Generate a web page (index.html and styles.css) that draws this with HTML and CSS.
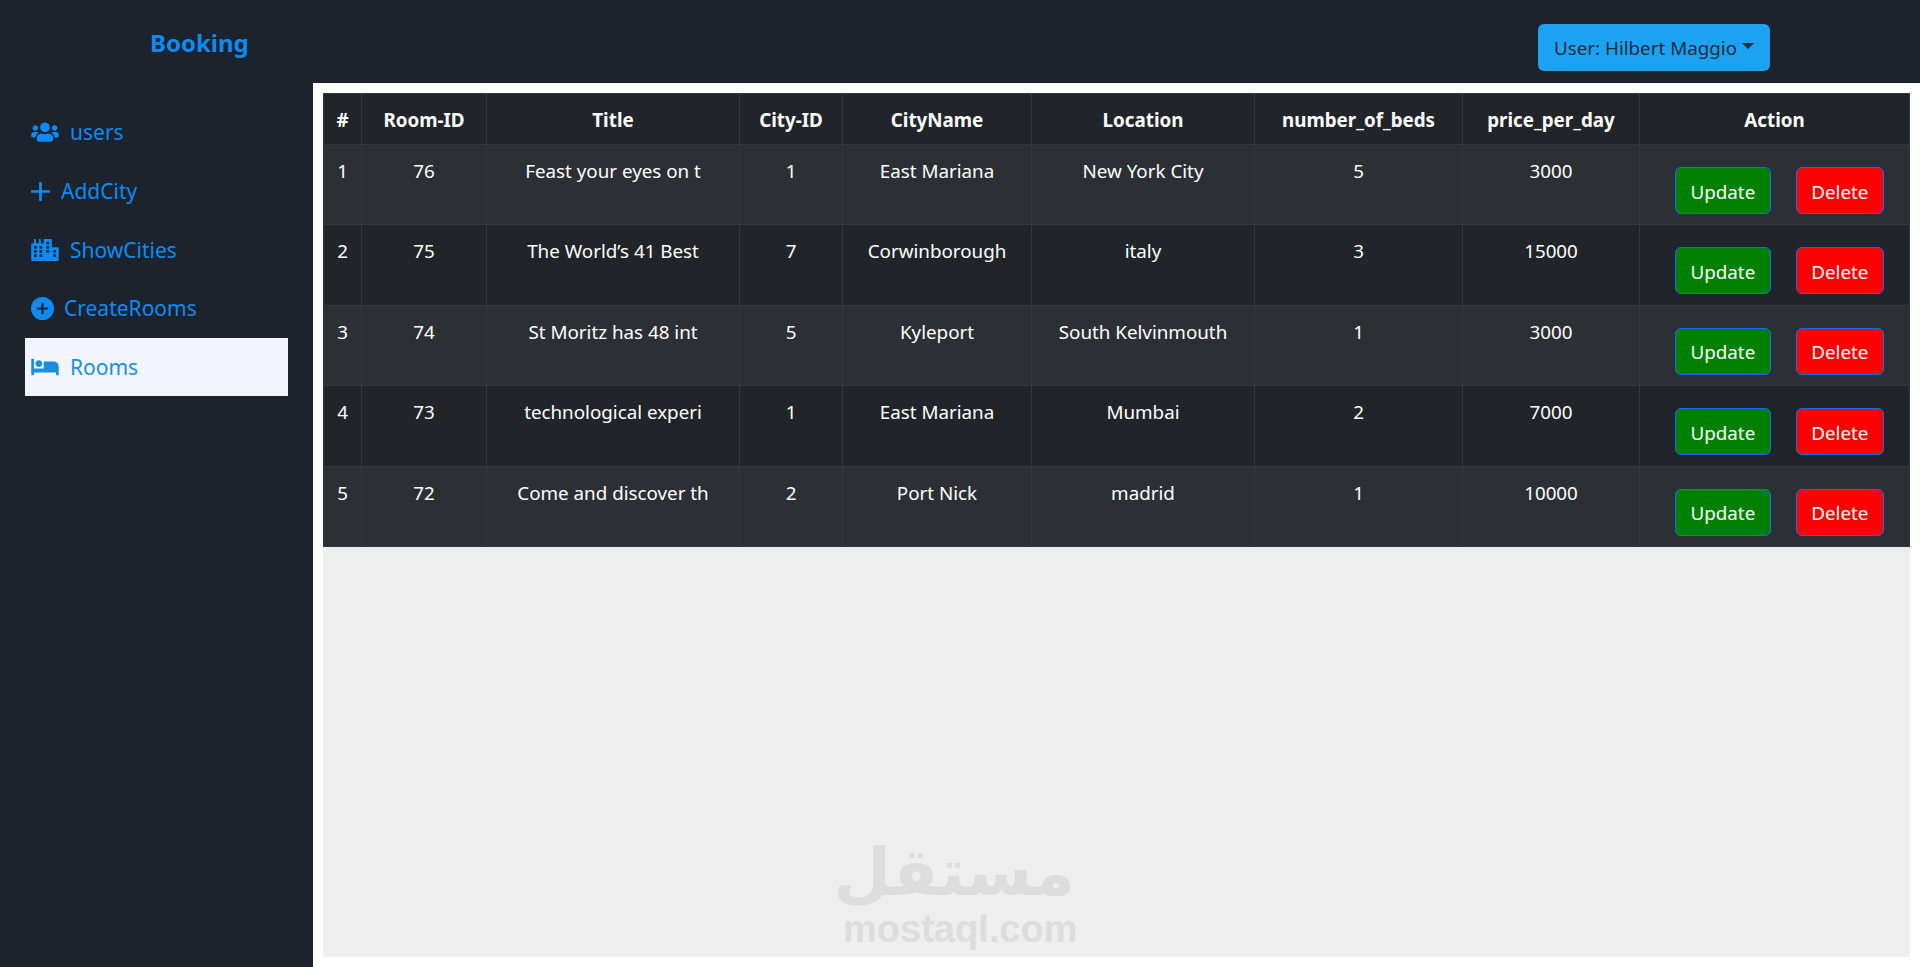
FILE: index.html
```html
<!DOCTYPE html>
<html lang="en">
<head>
    <meta charset="UTF-8">
    <meta name="viewport" content="width=device-width, initial-scale=1.0">
    <title>Booking</title>
    <link rel="stylesheet" href="styles.css">
</head>
<body>
    <header class="topbar">
        <a class="brand" href="#">Booking</a>
        <button class="user-btn">User: Hilbert Maggio<span class="caret"></span></button>
    </header>

    <div class="layout">
        <nav class="sidebar">
            <a class="nav-link" href="#">
                <svg class="icon icon-wide" viewBox="0 0 640 512"><path d="M96 224c35.3 0 64-28.7 64-64s-28.7-64-64-64-64 28.7-64 64 28.7 64 64 64zm448 0c35.3 0 64-28.7 64-64s-28.7-64-64-64-64 28.7-64 64 28.7 64 64 64zm32 32h-64c-17.6 0-33.5 7.1-45.1 18.6 40.3 22.1 68.9 62 75.1 109.4h66c17.7 0 32-14.3 32-32v-32c0-35.3-28.7-64-64-64zm-256 0c61.9 0 112-50.1 112-112S381.9 32 320 32 208 82.1 208 144s50.1 112 112 112zm76.8 32h-8.3c-20.8 10-43.9 16-68.5 16s-47.6-6-68.5-16h-8.3C179.6 288 128 339.6 128 403.2V432c0 26.5 21.5 48 48 48h288c26.5 0 48-21.5 48-48v-28.8c0-63.6-51.6-115.2-115.2-115.2zm-223.7-13.4C161.5 263.1 145.6 256 128 256H64c-35.3 0-64 28.7-64 64v32c0 17.7 14.3 32 32 32h65.9c6.3-47.4 34.9-87.3 75.2-109.4z"/></svg>
                users
            </a>
            <a class="nav-link" href="#">
                <svg class="icon icon-plus" viewBox="0 0 18 18"><path d="M9 1v16M1 9h16" fill="none" stroke="currentColor" stroke-width="2.6" stroke-linecap="round"/></svg>
                AddCity
            </a>
            <a class="nav-link" href="#">
                <svg class="icon icon-wide" viewBox="0 0 640 512"><path d="M616 192H480V24c0-13.26-10.74-24-24-24H312c-13.26 0-24 10.74-24 24v72h-64V16c0-8.84-7.16-16-16-16h-16c-8.84 0-16 7.16-16 16v80h-64V16c0-8.84-7.16-16-16-16H80c-8.84 0-16 7.16-16 16v80H24c-13.26 0-24 10.74-24 24v360c0 17.67 14.33 32 32 32h576c17.67 0 32-14.33 32-32V216c0-13.26-10.75-24-24-24zM128 404c0 6.63-5.37 12-12 12H76c-6.63 0-12-5.37-12-12v-40c0-6.63 5.37-12 12-12h40c6.63 0 12 5.37 12 12v40zm0-96c0 6.63-5.37 12-12 12H76c-6.63 0-12-5.37-12-12v-40c0-6.63 5.37-12 12-12h40c6.63 0 12 5.37 12 12v40zm0-96c0 6.63-5.37 12-12 12H76c-6.63 0-12-5.37-12-12v-40c0-6.63 5.37-12 12-12h40c6.63 0 12 5.37 12 12v40zm128 192c0 6.63-5.37 12-12 12h-40c-6.63 0-12-5.37-12-12v-40c0-6.63 5.37-12 12-12h40c6.63 0 12 5.37 12 12v40zm0-96c0 6.63-5.37 12-12 12h-40c-6.63 0-12-5.37-12-12v-40c0-6.63 5.37-12 12-12h40c6.63 0 12 5.37 12 12v40zm0-96c0 6.63-5.37 12-12 12h-40c-6.63 0-12-5.37-12-12v-40c0-6.63 5.37-12 12-12h40c6.63 0 12 5.37 12 12v40zm160 96c0 6.63-5.37 12-12 12h-40c-6.63 0-12-5.37-12-12v-40c0-6.63 5.37-12 12-12h40c6.63 0 12 5.37 12 12v40zm0-96c0 6.63-5.37 12-12 12h-40c-6.63 0-12-5.37-12-12v-40c0-6.63 5.37-12 12-12h40c6.63 0 12 5.37 12 12v40zm0-96c0 6.63-5.37 12-12 12h-40c-6.63 0-12-5.37-12-12V76c0-6.63 5.37-12 12-12h40c6.63 0 12 5.37 12 12v40zm160 288c0 6.63-5.37 12-12 12h-40c-6.63 0-12-5.37-12-12v-40c0-6.63 5.37-12 12-12h40c6.63 0 12 5.37 12 12v40zm0-96c0 6.63-5.37 12-12 12h-40c-6.63 0-12-5.37-12-12v-40c0-6.63 5.37-12 12-12h40c6.63 0 12 5.37 12 12v40z"/></svg>
                ShowCities
            </a>
            <a class="nav-link" href="#">
                <svg class="icon icon-circle" viewBox="0 0 24 24"><circle cx="12" cy="12" r="12"/><path d="M12 7v10M7 12h10" fill="none" stroke="#1c232d" stroke-width="2.2" stroke-linecap="round"/></svg>
                CreateRooms
            </a>
            <a class="nav-link active" href="#">
                <svg class="icon icon-wide" viewBox="0 0 640 512"><path d="M176 256c44.11 0 80-35.89 80-80s-35.89-80-80-80-80 35.89-80 80 35.89 80 80 80zm352-128H304c-8.84 0-16 7.16-16 16v144H64V80c0-8.84-7.16-16-16-16H16C7.16 64 0 71.16 0 80v352c0 8.84 7.16 16 16 16h32c8.84 0 16-7.16 16-16v-48h512v48c0 8.84 7.16 16 16 16h32c8.84 0 16-7.16 16-16V240c0-61.86-50.14-112-112-112z"/></svg>
                Rooms
            </a>
        </nav>

        <main class="content">
            <div class="panel">
                <table class="rooms">
                    <colgroup>
                        <col class="c-num"><col class="c-room"><col class="c-title"><col class="c-city">
                        <col class="c-name"><col class="c-loc"><col class="c-beds"><col class="c-price"><col>
                    </colgroup>
                    <thead>
                        <tr>
                            <th>#</th><th>Room-ID</th><th>Title</th><th>City-ID</th><th>CityName</th>
                            <th>Location</th><th>number_of_beds</th><th>price_per_day</th><th>Action</th>
                        </tr>
                    </thead>
                    <tbody>
                        <tr>
                            <td>1</td><td>76</td><td>Feast your eyes on t</td><td>1</td><td>East Mariana</td>
                            <td>New York City</td><td>5</td><td>3000</td>
                            <td class="actions"><button class="btn btn-update">Update</button><button class="btn btn-delete">Delete</button></td>
                        </tr>
                        <tr>
                            <td>2</td><td>75</td><td>The World’s 41 Best</td><td>7</td><td>Corwinborough</td>
                            <td>italy</td><td>3</td><td>15000</td>
                            <td class="actions"><button class="btn btn-update">Update</button><button class="btn btn-delete">Delete</button></td>
                        </tr>
                        <tr>
                            <td>3</td><td>74</td><td>St Moritz has 48 int</td><td>5</td><td>Kyleport</td>
                            <td>South Kelvinmouth</td><td>1</td><td>3000</td>
                            <td class="actions"><button class="btn btn-update">Update</button><button class="btn btn-delete">Delete</button></td>
                        </tr>
                        <tr>
                            <td>4</td><td>73</td><td>technological experi</td><td>1</td><td>East Mariana</td>
                            <td>Mumbai</td><td>2</td><td>7000</td>
                            <td class="actions"><button class="btn btn-update">Update</button><button class="btn btn-delete">Delete</button></td>
                        </tr>
                        <tr>
                            <td>5</td><td>72</td><td>Come and discover th</td><td>2</td><td>Port Nick</td>
                            <td>madrid</td><td>1</td><td>10000</td>
                            <td class="actions"><button class="btn btn-update">Update</button><button class="btn btn-delete">Delete</button></td>
                        </tr>
                    </tbody>
                </table>
                <div class="watermark">
                    <div class="wm-ar" lang="ar" dir="rtl">مستقل</div>
                    <div class="wm-en">mostaql.com</div>
                </div>
            </div>
        </main>
    </div>
</body>
</html>
```

FILE: styles.css
```css
* {
    box-sizing: border-box;
}
html, body {
    height: 100%;
}
body {
    margin: 0;
    font-family: "Noto Sans", "Open Sans", sans-serif;
    font-size: 18.8px;
    background-color: #1c232d;
    display: flex;
    flex-direction: column;
    overflow: hidden;
}

/* top bar */
.topbar {
    height: 83px;
    flex: none;
    display: flex;
    justify-content: space-between;
    align-items: flex-start;
    padding: 24px 150px 0 150px;
}
.brand {
    color: #0d8bf5;
    font-size: 24px;
    font-weight: 700;
    line-height: 38px;
    text-decoration: none;
}
.user-btn {
    width: 232px;
    height: 47px;
    padding: 1px 0 0 0;
    border: none;
    border-radius: 6px;
    background-color: #1da1f2;
    color: #212e3f;
    font-family: inherit;
    font-size: 18.8px;
    display: flex;
    align-items: center;
    justify-content: center;
}
.caret {
    width: 0;
    height: 0;
    margin-left: 5px;
    margin-top: -5px;
    border-top: 6px solid #212e3f;
    border-left: 6px solid transparent;
    border-right: 6px solid transparent;
}

.layout {
    flex: 1;
    display: flex;
    min-height: 0;
}

/* sidebar */
.sidebar {
    width: 313px;
    flex: none;
    padding: 20px 25px 0 25px;
}
.nav-link {
    height: 58.7px;
    padding-left: 6px;
    display: flex;
    align-items: center;
    color: #0d8bf5;
    font-size: 21px;
    text-decoration: none;
}
.nav-link.active {
    background-color: #f3f5fe;
    color: #1a90db;
}
.icon {
    fill: currentColor;
    flex: none;
}
.icon-wide {
    width: 28px;
    height: 22px;
    margin-right: 11px;
}
.icon-plus {
    width: 19px;
    height: 19px;
    margin-right: 11px;
}
.icon-circle {
    width: 23px;
    height: 23px;
    margin-right: 10px;
}

/* main area */
.content {
    flex: 1;
    background-color: #fff;
    padding: 10px;
}
.panel {
    height: 100%;
    background-color: #eee;
    position: relative;
}
.rooms {
    width: 100%;
    table-layout: fixed;
    border-collapse: collapse;
    color: #fff;
    background-color: #212529;
}
.c-num { width: 38px; }
.c-room { width: 125px; }
.c-title { width: 253px; }
.c-city { width: 103px; }
.c-name { width: 189px; }
.c-loc { width: 223px; }
.c-beds { width: 208px; }
.c-price { width: 177px; }

.rooms th,
.rooms td {
    border: 1px solid #32383e;
    text-align: center;
    white-space: nowrap;
    overflow: hidden;
}
.rooms th {
    height: 51px;
    font-weight: 700;
    padding: 1px 0 0 0;
}
.rooms td {
    height: 80.4px;
    vertical-align: top;
    padding: 13px 0 0 0;
}
.rooms tbody tr:nth-child(odd) {
    background-color: #2c3035;
}
.rooms td.actions {
    padding: 22px 0 0 35px;
    text-align: left;
}
.btn {
    height: 47px;
    padding: 2px 14.5px 0;
    border: 1px solid #0d6efd;
    border-radius: 6px;
    color: #fff;
    font-family: inherit;
    font-size: 18.8px;
}
.btn-update {
    background-color: #008000;
    margin-right: 25px;
}
.btn-delete {
    background-color: #f00;
}

/* watermark over the grey panel */
.watermark {
    position: absolute;
    left: 520px;
    bottom: 9px;
    width: 232px;
    text-align: center;
    color: #ddd;
    line-height: 1;
}
.wm-ar {
    font-family: "DejaVu Sans", sans-serif;
    font-size: 66px;
    font-weight: 700;
    line-height: 1.1;
}
.wm-en {
    font-family: "Liberation Sans", sans-serif;
    font-size: 38px;
    font-weight: 700;
}
```
